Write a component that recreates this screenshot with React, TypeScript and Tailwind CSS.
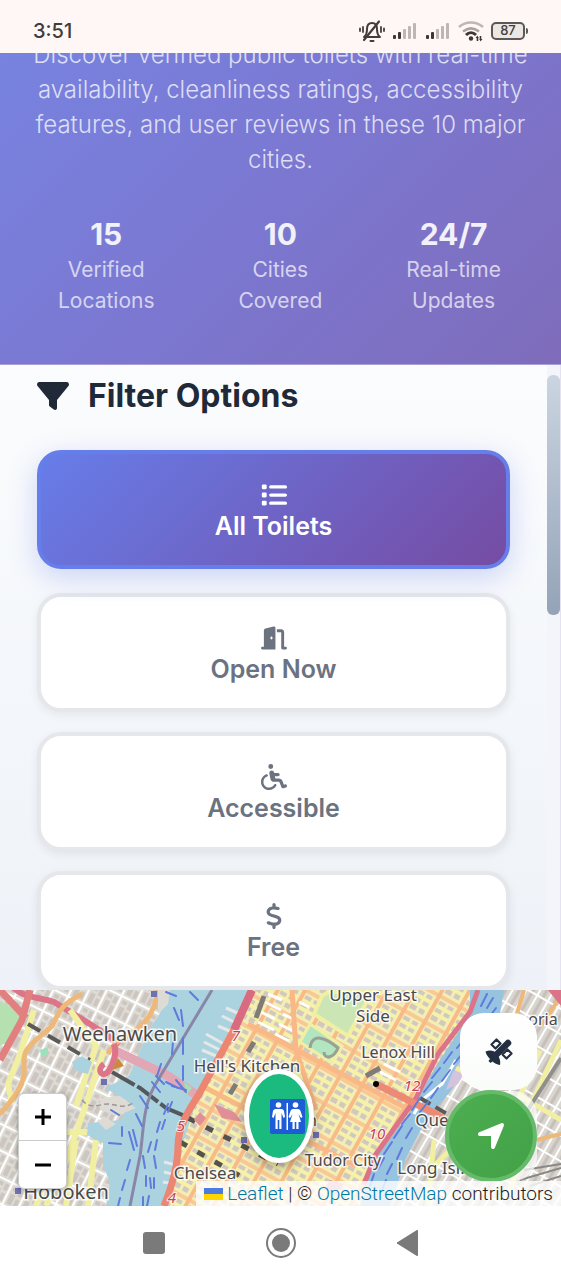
import { FaFilter, FaList, FaDoorOpen, FaWheelchair, FaDollarSign, FaLocationArrow } from 'react-icons/fa6';

const stats = [
  { value: '15', label: ['Verified', 'Locations'] },
  { value: '10', label: ['Cities', 'Covered'] },
  { value: '24/7', label: ['Real-time', 'Updates'] },
];

const filters = [
  { name: 'All Toilets', Icon: FaList, active: true },
  { name: 'Open Now', Icon: FaDoorOpen, active: false },
  { name: 'Accessible', Icon: FaWheelchair, active: false },
  { name: 'Free', Icon: FaDollarSign, active: false },
];

const labels = [
  { text: 'Weehawken', x: 120, y: 51, size: 20 },
  { text: 'Hoboken', x: 66, y: 209, size: 20 },
  { text: "Hell's Kitchen", x: 247, y: 82, size: 17 },
  { text: 'Chelsea', x: 205, y: 189, size: 17 },
  { text: 'Upper East', x: 373, y: 11, size: 17 },
  { text: 'Side', x: 373, y: 32, size: 17 },
  { text: 'Lenox Hill', x: 398, y: 68, size: 16 },
  { text: 'Tudor City', x: 343, y: 176, size: 16 },
  { text: 'Long Isl.', x: 431, y: 184, size: 17 },
  { text: 'Que', x: 432, y: 136, size: 17 },
  { text: 'oria', x: 543, y: 35, size: 16 },
  { text: 'n', x: 312, y: 136, size: 16 },
];

const exits = [
  { text: '7', x: 236, y: 51 },
  { text: '5', x: 181, y: 141 },
  { text: '4', x: 172, y: 213 },
  { text: '12', x: 412, y: 101 },
  { text: '10', x: 377, y: 149 },
];

const ferries = [
  'M166 2l10 4M174 18l5 12M181 20l2 16M173 52l-1 12M183 48v16M183 76v14M161 74l-4 12M152 92l8 10M156 86l8 8M166 92l12 6M172 96l14 4M176 90l10 12M190 2l8 8',
  'M111 120l8 5M122 137v9M129 142l5 18M133 140l4 16M109 153l12 1M130 170l-3 10M125 190l-3 10M120 208l-2 8M143 166l2 12M154 166l2 12M151 152l-3 10M157 150l-2 10M160 132l-3 10M165 130l-3 9M168 114l-4 10M172 112l-4 10M140 106l8 12M136 124l6 12M146 186v10M150 188l1 10M154 188v10M143 207v9M149 206l-2 10',
  'M487 4l-6 12M493 8l-6 10M496 18l-6 8M476 34l-7 10M484 30l-6 10M465 48l-8 10M474 46l-6 10M452 62l-8 11M462 64l-8 10M440 78l-8 10M450 80l-8 11M432 92l-8 10M438 98l-7 10M420 108l-8 12M428 112l-8 10M410 124l-8 10M402 136l-8 12M412 138l-6 10M392 152l-8 12M402 158l-5 11M384 168l-6 11M392 174l-5 10M374 184l-4 12M386 190l-4 10',
];

const signalBars = [4, 7, 10, 13, 16];

const Signal = () => (
  <svg className="h-[18px] w-[26px]" viewBox="0 0 26 18" aria-hidden="true">
    {signalBars.map((h, i) => (
      <rect key={h} x={1 + i * 5} y={17 - h} width="3" height={h} rx="1" fill={i < 2 ? '#3b3735' : '#bdb6b4'} />
    ))}
  </svg>
);

const StatusBar = () => (
  <header className="flex h-[53px] shrink-0 items-center justify-between bg-[#fff7f6] px-[33px] pt-2 text-[#413d3b]">
    <span className="font-['Inter',sans-serif] text-xl font-medium">3:51</span>
    <div className="flex items-center gap-[7px]">
      <svg className="h-6 w-[26px]" viewBox="0 0 26 24" fill="none" stroke="currentColor" strokeLinecap="round" strokeLinejoin="round" aria-hidden="true">
        <path d="M5 18c3-2 3-5 3-8 0-4 2-6 5-6s5 2 5 6c0 3 0 6 3 8z" strokeWidth="2" />
        <path d="M11.500 22h3" strokeWidth="2" />
        <path d="M5 21L20 2.500" strokeWidth="2.200" />
        <path d="M4 8v5M1 9.500v2.500M22 8v5M25 9.500v2.500" strokeWidth="1.800" />
      </svg>
      <Signal />
      <Signal />
      <svg className="h-6 w-[26px]" viewBox="0 0 26 24" fill="none" strokeWidth="2.600" aria-hidden="true">
        <path d="M1 8c7-6 17-6 24 0" stroke="#bdb6b4" />
        <path d="M5 12.500c5-4 11-4 16 0" stroke="#aaa3a1" />
        <path d="M8 16c3-3 7-3 10 0" stroke="#3b3735" strokeWidth="3" />
        <circle cx="13" cy="19.500" r="2.200" fill="#3b3735" />
        <path d="M19.500 22v-4M22.500 17v4" stroke="#3b3735" strokeWidth="1.600" />
        <path d="M17.500 19l2-2.500 1 2.500zM21.500 20l1 2.500 2-2.500z" fill="#3b3735" />
      </svg>
      <span className="flex items-center gap-px">
        <span className="flex h-[18px] w-[34px] items-center justify-center rounded-[5px] border-2 border-[#5c5856] bg-[#ece6e5] font-['Inter',sans-serif] text-[13px] font-medium">87</span>
        <span className="h-[6px] w-[2px] rounded-r bg-[#5c5856]" />
      </span>
    </div>
  </header>
);

const Hero = () => (
  <section className="shrink-0 overflow-hidden border-b border-[#a9a0d6] bg-[linear-gradient(135deg,#7783e0_0%,#7b78d2_45%,#7f6cba_100%)] px-6 text-center">
    <p className="-mt-4 text-2xl font-light leading-[35px] text-white/75">
      Discover verified public toilets with real-time availability, cleanliness ratings, accessibility features, and user reviews in these 10 major cities.
    </p>
    <div className="mt-[37px] flex justify-between pb-12 pl-[34px] pr-9">
      {stats.map((stat) => (
        <div key={stat.value}>
          <div className="text-3xl font-bold leading-10 text-white/90">{stat.value}</div>
          {stat.label.map((line) => (
            <div key={line} className="text-[21px] leading-[31px] text-white/70">{line}</div>
          ))}
        </div>
      ))}
    </div>
  </section>
);

const FilterPanel = () => (
  <section className="flex min-h-0 flex-1 overflow-hidden bg-[linear-gradient(180deg,#fbfcfd_0%,#f4f7fb_50%,#eef1f7_100%)] pl-[37px]">
    <div className="flex-1 pt-[11px]">
      <h2 className="flex items-center gap-[19px] text-[32px] font-bold leading-10 text-[#1f2937]">
        <FaFilter className="size-8" />
        Filter Options
      </h2>
      <div className="mt-[38px] flex flex-col gap-5">
        {filters.map(({ name, Icon, active }) => (
          <button
            key={name}
            type="button"
            aria-pressed={active}
            className={
              active
                ? 'flex w-full -translate-y-1 flex-col items-center gap-[2px] rounded-3xl border-4 border-[#667eea] bg-[linear-gradient(135deg,#667eea,#764ba2)] bg-origin-border pt-7 pb-[23px] text-[25px] font-semibold leading-8 text-white shadow-[0_8px_28px_rgba(102,126,234,0.3)]'
                : 'flex w-full flex-col items-center gap-[2px] rounded-3xl border-4 border-[#e5e7eb] bg-white pt-7 pb-[23px] text-[25px] font-semibold leading-8 text-[#6b7280] shadow-[0_3px_10px_rgba(0,0,0,0.07)]'
            }
          >
            <Icon className="h-[26px] w-auto" />
            {name}
          </button>
        ))}
      </div>
    </div>
    <div className="ml-[37px] w-[14px] border-r border-[#e4e2f0] bg-[#f3f5fa] pt-[10px]">
      <div className="h-60 rounded-md bg-[linear-gradient(180deg,#cbd5e1,#94a3b8)]" />
    </div>
  </section>
);

const CityMap = () => (
  <svg className="absolute inset-0 h-full w-full" viewBox="0 0 561 216" preserveAspectRatio="xMidYMid slice" aria-label="Map of Manhattan">
    <defs>
      <pattern id="blocks" width="16" height="24" patternUnits="userSpaceOnUse" patternTransform="rotate(26)">
        <rect width="16" height="24" fill="#fff" />
        <rect x="1" y="1" width="14" height="22" fill="#dedbd5" />
        <path d="M3 3h5v4H3zM10 3h4v7h-4zM3 10h5v11H3zM10 13h4v8h-4z" fill="#cdc6c0" />
      </pattern>
      <pattern id="grid" width="24" height="30" patternUnits="userSpaceOnUse" patternTransform="rotate(29)">
        <rect width="24" height="30" fill="#f3eeb4" />
        <path d="M6 6h7v4H6zM16 6h6v4h-6zM6 14h7v4H6zM16 14h6v4h-6zM6 22h7v5H6zM16 22h6v5h-6z" fill="#d3c8be" />
        <path d="M0 12h24M0 20h24" stroke="#f6f3a4" strokeWidth="3" />
        <path d="M0 2h24" stroke="#f9c995" strokeWidth="4" />
        <path d="M3 0v30" stroke="#f8bb88" strokeWidth="4" />
      </pattern>
      <pattern id="queens" width="12" height="22" patternUnits="userSpaceOnUse" patternTransform="rotate(30)">
        <rect width="12" height="22" fill="#fff" />
        <rect x="1" y="1" width="10" height="20" fill="#d9d5cf" />
        <path d="M6 1v20" stroke="#c6beb8" strokeWidth="3" />
      </pattern>
    </defs>
    <rect width="561" height="216" fill="url(#blocks)" />

    {/* Jersey side roads */}
    <path d="M0 12l20 8 4 12-12 18-12 6z" fill="#b5e0b0" />
    <path d="M0 2c16 20 30 16 48 22l36 22 30 20" fill="none" stroke="#dd7487" strokeWidth="6" transform="translate(6 -12)" />
    <path d="M30 0l-8 30-22 40M0 0l26 28" fill="none" stroke="#e27f7f" strokeWidth="7" />
    <path d="M34 20l-14 44-12 30 4 20M70 20l26 36-20 60M104 60l-20 60-16 46-22 50M66 122l-30 94M76 150l-10 66M60 142h42M96 150l-8 66" fill="none" stroke="#f1efa2" strokeWidth="6" />
    <path d="M82 4c-20 10-22 16-30 32-14 14-30 20-28 38s-6 30-24 50M158 0c-4 24-12 34-30 46-10 4-14 8-20 18" fill="none" stroke="#eeb878" strokeWidth="5" />
    <path d="M28 34l62 36" stroke="#5c5a57" strokeWidth="4" strokeDasharray="14 9" />
    <path d="M72 72l10-6 10 6-4 12-12-3z" fill="#aad3df" />
    <path d="M40 60l8-3v8l-7 2zM88 200l6 4-4 6-5-4z" fill="#9ee0b9" />

    {/* Hudson */}
    <path d="M165 0l-3 20-13 20-20 46-24 12 24 14-8 18-33 3-1 12 16 8v22l7 18-4 23h65l15-55 10-42 45-94 7-26z" fill="#aad3df" />
    <path d="M160 22l8-8 2-14h-12v24z" fill="#dedbd5" />
    <path d="M100 108l20-2 16 12-20 8-16-6zM104 126l12 8-10 6-8-8z" fill="#dedbd5" />
    <path d="M114 60l54 26 30 20" fill="none" stroke="#e2a6b5" strokeWidth="9" />
    <path d="M112 82l28 16 26 20 24 10" fill="none" stroke="#55585a" strokeWidth="4" strokeDasharray="26 3" />
    <path d="M212 0l-54 90c-16 24-14 50-18 76l-10 50" fill="none" stroke="#8a86a8" strokeWidth="3" />
    <path d="M82 110c8 10 18 4 26 4s16 6 26-2" fill="none" stroke="#99979a" strokeWidth="1.500" strokeDasharray="5 3" />
    <path d="M114 54c4 12-2 22-6 28-6 6-12-2-4-8" fill="none" stroke="#dd7487" strokeWidth="6" />
    <path d="M112 80l6-12 6 8z" fill="#cc8a3e" />

    {/* Manhattan */}
    <path d="M248 0L198 106l-16 50-16 60h204l14-46 60-92 34-56V0z" fill="url(#grid)" />
    <path d="M226 18l14 6M222 26l16 8M218 36l14 6M206 44l18 10M204 52l16 8M202 60l14 6M164 172l12 3M164 182l12 3M163 192l12 2" stroke="#e4e8e6" strokeWidth="3" />
    <path d="M268 4l14 6M265 12l16 8M261 22l14 7M258 32l16 8M283 24l12 6M279 34l14 7M275 44l14 7M299 12l10 5M384 74l16 8M380 82l16 8" stroke="#fff" strokeWidth="3" />
    <path d="M322 6l-8 18 34 22 24-44h-44z" fill="#cbe5b4" stroke="#f1efa2" strokeWidth="4" />
    <path d="M310 34l-10 18 30 20 12-16z" fill="#b2e6c0" stroke="#f1efa2" strokeWidth="3" />
    <path d="M310 58c2-16 16-10 28 0-4 10-14 12-14 4" fill="none" stroke="#9c9f94" strokeWidth="3" />
    <path d="M292 0l4 60 20 60M248 34l180 96M206 98l150 78" fill="none" stroke="#f9b885" strokeWidth="5" />
    <path d="M188 128l90 46M180 152l60 34" fill="none" stroke="#56534e" strokeWidth="5" strokeDasharray="8 12" />
    <path d="M264 6l-8 22M254 52l-6 10M236 94l-6 10M366 86l14-8" stroke="#7f7c77" strokeWidth="5" />
    <path d="M214 114l20 8 8 10-20-4zM200 122l6 6-6 8-6-6zM330 190l14 4-8 10-12-4z" fill="#e08f96" />
    <path d="M252 0l-18 40" stroke="#d96b80" strokeWidth="8" />
    <path d="M234 40l-36 66c-8 12-20 30-20 50s-6 40-14 60" fill="none" stroke="#ec8572" strokeWidth="7" />
    <path d="M184 92l8 6-6 8" fill="#9ee0b9" />

    {/* East River and Queens */}
    <path d="M500 0l-5 15-17 35-28 45-25 30-20 45-15 46h171V0z" fill="url(#queens)" />
    <path d="M470 0h34l-4 24-20 34-30 44-24 28-20 38-16 48h-30l14-46 36-48 26-46 34-52z" fill="#96c3e0" />
    <path d="M452 84l12-18 8 4-14 24-12 6z" fill="#d3c3df" />
    <path d="M478 0l-8 22-32 42-22 44-40 56-12 30" fill="none" stroke="#db7489" strokeWidth="5" />
    <path d="M456 70l-14 24-20 16-8 14" fill="none" stroke="#fff" strokeWidth="3" />
    <path d="M376 94l60 30 26 16" fill="none" stroke="#ee8a74" strokeWidth="7" />
    <path d="M420 108l34 20" stroke="#5c5a57" strokeWidth="4" strokeDasharray="12 6" />
    <path d="M434 150l-6 66M460 150l-30 30M540 60l-20 46 41 24M456 78l30 14M561 50l-40 86-10 70" fill="none" stroke="#f1efa2" strokeWidth="5" />
    <path d="M536 150l25-6M524 0l-12 40M561 6l-20 30" fill="none" stroke="#eeb878" strokeWidth="4" />
    <path d="M561 68l-46 72" stroke="#8f8f8c" strokeWidth="4" />
    <path d="M520 190l41-12M524 180l37-6M530 196l31-10" stroke="#8a8885" strokeWidth="2" />
    <path d="M548 0l13 16V0z" fill="#db7489" />

    {ferries.map((d) => (
      <path key={d} d={d} fill="none" stroke="#5f7bdd" strokeWidth="2" strokeLinecap="round" />
    ))}
    <path d="M151 1h6v6h-6zM101 89h6v6h-6zM15 198h6v6h-6zM241 147h6v6h-6zM313 142h6v6h-6z" fill="#6e70b0" />
    <circle cx="376" cy="94" r="3" />

    {labels.map((label) => (
      <text
        key={label.text}
        x={label.x}
        y={label.y}
        fontSize={label.size}
        textAnchor="middle"
        className="fill-[#4a4a4a] stroke-white/80 stroke-[3px] font-['Noto_Sans',sans-serif] [paint-order:stroke]"
      >
        {label.text}
      </text>
    ))}
    {exits.map((exit) => (
      <text
        key={exit.text}
        x={exit.x}
        y={exit.y}
        textAnchor="middle"
        className="fill-[#c5405a] stroke-white/80 stroke-2 font-['Noto_Sans',sans-serif] text-[15px] italic [paint-order:stroke]"
      >
        {exit.text}
      </text>
    ))}
  </svg>
);

const ToiletMarker = () => (
  <button
    type="button"
    aria-label="Public toilet"
    className="absolute left-[244px] top-[79px] flex h-[94px] w-[70px] items-center justify-end rounded-[50%] border-[5px] border-white bg-[#1bbb80] pr-1 shadow-[0_4px_12px_rgba(0,0,0,0.3)]"
  >
    <svg className="size-[35px]" viewBox="0 0 35 35" aria-hidden="true">
      <rect width="35" height="35" rx="2" fill="#1d5cd6" />
      <g fill="#fff">
        <circle cx="8.500" cy="6" r="2.800" />
        <path d="M5.500 10h6c1.500 0 2 1 2.500 2l1 6-1.500 1-2-5v16H9.300v-9H7.700v9H5.500V14l-2 5L2 18l1-6c.500-1 1-2 2.500-2z" />
        <path d="M16.500 4h1.500v27h-1.500z" />
        <circle cx="25.500" cy="6" r="2.800" />
        <path d="M23 10h5c1.500 0 2 1 2.500 2l2 6-1.500 1-2.500-4 2.500 8h-2.500v7h-2.200v-7h-1.600v7h-2.200v-7H20l2.500-8-2.500 4-1.500-1 2-6c.500-1 1-2 2.500-2z" />
      </g>
    </svg>
  </button>
);

const MapView = () => (
  <section className="relative h-[216px] shrink-0 overflow-hidden">
    <CityMap />
    <ToiletMarker />
    <div className="absolute left-[18px] top-[103px] flex flex-col divide-y divide-[#ccc] overflow-hidden rounded-md border border-black/20 bg-white shadow-[0_1px_4px_rgba(0,0,0,0.4)]">
      <button type="button" aria-label="Zoom in" className="flex size-[47px] items-center justify-center">
        <svg className="size-[18px]" viewBox="0 0 18 18" stroke="#000" strokeWidth="3"><path d="M1 9h16M9 1v16" /></svg>
      </button>
      <button type="button" aria-label="Zoom out" className="flex size-[47px] items-center justify-center">
        <svg className="size-[18px]" viewBox="0 0 18 18" stroke="#000" strokeWidth="3"><path d="M1 9h16" /></svg>
      </button>
    </div>
    <div className="absolute right-6 top-[101px] h-[90px] w-[77px] rounded-3xl bg-white/70" />
    <button
      type="button"
      aria-label="Satellite view"
      className="absolute right-6 top-[23px] flex size-[77px] items-center justify-center rounded-3xl bg-[linear-gradient(180deg,#fff,#fafcfa)]"
    >
      <svg className="size-7" viewBox="0 0 28 28" fill="#232f40" stroke="#232f40" aria-hidden="true">
        <path d="M11.500 16.500L23 5" fill="none" strokeWidth="6.500" strokeLinecap="round" />
        <path d="M11.500 1.500l4 4-5 5-4-4zM22.500 11.500l4 4-5 5-4-4z" fill="#fff" strokeWidth="2.200" strokeLinejoin="round" />
        <path d="M.500 13.500c4-1.500 7.500-1.500 10.500 1.500s5 7.500 4 12c-3-.500-5.500-1.800-7.500-3.500L5.500 25l-2-2 1.500-2C2.800 18.800 1.200 16.500.500 13.500z" stroke="none" />
      </svg>
    </button>
    <button
      type="button"
      aria-label="My location"
      className="absolute right-6 top-[100px] flex size-[92px] items-center justify-center rounded-full border-4 border-[#66bb6a] bg-[linear-gradient(135deg,#4caf50,#43a047)] text-white"
    >
      <FaLocationArrow className="size-8" />
    </button>
    <div className="absolute bottom-0 right-0 flex h-[25px] items-center gap-1 bg-white/80 px-2 font-['Roboto',sans-serif] text-[19px] font-light leading-6 text-[#222]">
      <svg className="h-3 w-[19px]" viewBox="0 0 19 12" aria-hidden="true">
        <path fill="#4c7be1" d="M0 0h19v6H0z" />
        <path fill="#ffd500" d="M0 6h19v6H0z" />
      </svg>
      <span>
        <a href="#leaflet" className="text-[#0078a8]">Leaflet</a> | © <a href="#osm" className="text-[#0078a8]">OpenStreetMap</a> contributors
      </span>
    </div>
  </section>
);

const NavBar = () => (
  <nav className="flex h-[74px] shrink-0 items-center justify-center bg-white text-[#7a7a7a]">
    <button type="button" aria-label="Recent apps" className="flex w-[127px] justify-center">
      <span className="size-[22px] rounded-[3px] bg-current" />
    </button>
    <button type="button" aria-label="Home" className="flex w-[127px] justify-center">
      <span className="flex size-[30px] items-center justify-center rounded-full border-2 border-current">
        <span className="size-[18px] rounded-full bg-current" />
      </span>
    </button>
    <button type="button" aria-label="Back" className="flex w-[127px] justify-center">
      <svg className="h-[26px] w-[21px]" viewBox="0 0 21 26" fill="currentColor" aria-hidden="true">
        <path d="M21 1v24a1 1 0 0 1-1.500.800L.800 14a1 1 0 0 1 0-2L19.500.200A1 1 0 0 1 21 1z" />
      </svg>
    </button>
  </nav>
);

export default function App() {
  return (
    <div className="flex h-screen flex-col overflow-hidden font-['Inter',sans-serif]">
      <StatusBar />
      <Hero />
      <FilterPanel />
      <MapView />
      <NavBar />
    </div>
  );
}
